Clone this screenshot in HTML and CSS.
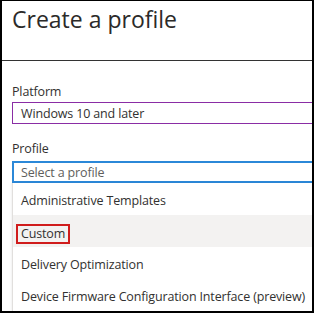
FILE: index.html
```html
<!DOCTYPE html>
<html>
<head>
<meta charset="utf-8">
<link rel="stylesheet" href="styles.css">
</head>
<body>
<div class="frame">
  <header class="head">
    <h1 class="title">Create a profile</h1>
  </header>
  <section class="form">
    <label class="label label-platform">Platform</label>
    <div class="field field-platform">Windows 10 and later</div>
    <label class="label label-profile">Profile</label>
    <div class="field field-profile">Select a profile</div>
    <ul class="list">
      <li class="item">Administrative Templates</li>
      <li class="item item-hover"><span class="mark">Custom</span></li>
      <li class="item">Delivery Optimization</li>
      <li class="item">Device Firmware Configuration Interface (preview)</li>
    </ul>
  </section>
</div>
</body>
</html>
```

FILE: styles.css
```css
* { box-sizing: border-box; }
html, body { margin: 0; padding: 0; background: #fff; }
body {
  font-family: "Open Sans", "Noto Sans", sans-serif;
  color: #323130;
}
.frame {
  width: 314px;
  height: 313px;
  border-style: solid;
  border-color: #000;
  border-width: 1px 2px 2px 2px;
  overflow: hidden;
  display: flex;
  flex-direction: column;
}
.head {
  height: 60px;
  flex: none;
  border-bottom: 1px solid #333;
  padding: 2px 0 0 10px;
}
.title {
  margin: 0;
  font-weight: 400;
  font-size: 23px;
  line-height: 32px;
  color: #2b2a29;
}
.form {
  padding: 21px 0 0 10px;
  display: flex;
  flex-direction: column;
  font-size: 12.5px;
  letter-spacing: -0.15px;
}
.label {
  display: block;
  line-height: 20px;
  height: 20px;
}
.label-platform { margin-bottom: 0; }
.label-profile { margin-top: 15px; margin-bottom: 2px; }
.field {
  width: 320px;
  height: 22px;
  line-height: 21px;
  padding-left: 8px;
}
.field-platform { border: 1px solid #8a2da5; }
.field-profile {
  border: 2px solid #2b88d8;
  line-height: 19px;
  padding-left: 7px;
  color: #605e5c;
}
.list {
  list-style: none;
  margin: 0 -10px 0 0;
  padding: 0;
  border-left: 1px solid #e1dfdd;
  box-shadow: -1px 0 2px rgba(0,0,0,0.06);
}
.item {
  height: 32px;
  line-height: 29px;
  padding: 3px 0 0 8px;
  white-space: nowrap;
}
.item-hover { background: #f3f2f1; }
.mark {
  display: inline-block;
  border: 2px solid #d01c1c;
  line-height: 16px;
  padding: 0 3px 0 3px;
  margin-left: -5px;
  vertical-align: middle;
}
```
